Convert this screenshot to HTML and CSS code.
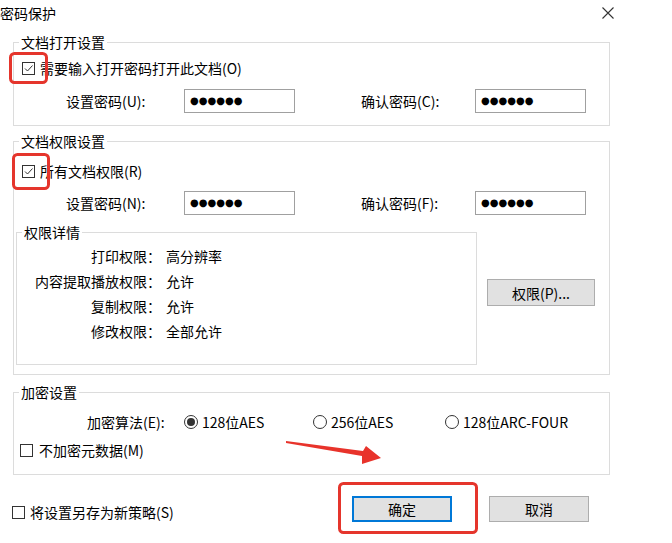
FILE: index.html
```html
<!DOCTYPE html>
<html lang="zh-CN">
<head>
  <meta charset="UTF-8">
  <title>密码保护</title>
  <link rel="stylesheet" href="styles.css">
</head>
<body>

<div class="titlebar">
  <span class="title">密码保护</span>
  <span class="close">
    <svg width="12" height="12" viewBox="0 0 12 12"><path d="M0.5 0.5 L11.5 11.5 M11.5 0.5 L0.5 11.5" stroke="#333" stroke-width="1.1" fill="none"/></svg>
  </span>
</div>

<div class="dialog">
  <!-- 文档打开设置 -->
  <fieldset class="group g-open">
    <legend>文档打开设置</legend>
    <label class="check-row">
      <span class="checkbox"><svg width="11" height="11" viewBox="0 0 11 11"><path d="M2 5.5 L4.5 8 L9.5 2.5" stroke="#333" stroke-width="1" fill="none"/></svg></span>
      需要输入打开密码打开此文档(O)
    </label>
    <div class="pw-row">
      <span class="pw-label">设置密码(U):</span><span class="pw-input">●●●●●●</span>
      <span class="pw-label right">确认密码(C):</span><span class="pw-input">●●●●●●</span>
    </div>
  </fieldset>

  <!-- 文档权限设置 -->
  <fieldset class="group g-perm">
    <legend>文档权限设置</legend>
    <label class="check-row">
      <span class="checkbox"><svg width="11" height="11" viewBox="0 0 11 11"><path d="M2 5.5 L4.5 8 L9.5 2.5" stroke="#333" stroke-width="1" fill="none"/></svg></span>
      所有文档权限(R)
    </label>
    <div class="pw-row">
      <span class="pw-label">设置密码(N):</span><span class="pw-input">●●●●●●</span>
      <span class="pw-label right">确认密码(F):</span><span class="pw-input">●●●●●●</span>
    </div>
    <div class="perm-area">
      <fieldset class="detail">
        <legend>权限详情</legend>
        <div class="detail-row"><span class="detail-key">打印权限：</span><span class="detail-val">高分辨率</span></div>
        <div class="detail-row"><span class="detail-key">内容提取播放权限：</span><span class="detail-val">允许</span></div>
        <div class="detail-row"><span class="detail-key">复制权限：</span><span class="detail-val">允许</span></div>
        <div class="detail-row"><span class="detail-key">修改权限：</span><span class="detail-val">全部允许</span></div>
      </fieldset>
      <button class="btn perm-btn">权限(P)...</button>
    </div>
  </fieldset>

  <!-- 加密设置 -->
  <fieldset class="group g-enc">
    <legend>加密设置</legend>
    <div class="algo-row">
      <span class="algo-label">加密算法(E):</span>
      <label class="radio-opt opt1"><span class="radio on"></span>128位AES</label>
      <label class="radio-opt opt2"><span class="radio"></span>256位AES</label>
      <label class="radio-opt"><span class="radio"></span>128位ARC-FOUR</label>
    </div>
    <label class="check-row">
      <span class="checkbox"></span>
      不加密元数据(M)
    </label>
  </fieldset>

  <div class="footer">
    <label class="check-row">
      <span class="checkbox"></span>
      将设置另存为新策略(S)
    </label>
    <div class="footer-btns">
      <button class="btn default">确定</button>
      <button class="btn">取消</button>
    </div>
  </div>
</div>

<!-- red annotations -->
<svg class="marks" width="672" height="543" viewBox="0 0 672 543">
  <rect x="10.5" y="53.5" width="36" height="29" rx="4" fill="none" stroke="#e5352c" stroke-width="3"/>
  <rect x="13.5" y="154.5" width="35" height="34" rx="4" fill="none" stroke="#e5352c" stroke-width="3"/>
  <rect x="339.5" y="483.5" width="137" height="49" rx="4" fill="none" stroke="#e5352c" stroke-width="3"/>
  <polygon points="286,441 363,451 366,446 381,458 362,464 362,456 286,443" fill="#e8332b"/>
</svg>

</body>
</html>
```

FILE: styles.css
```css
body {
  margin: 0;
  width: 672px;
  height: 543px;
  overflow: hidden;
  position: relative;
  background: #ffffff;
  color: #000;
  font-family: "Noto Sans CJK SC", "Noto Sans", sans-serif;
  font-size: 14px;
  line-height: 20px;
}

/* Title bar */
.titlebar {
  display: flex;
  justify-content: space-between;
  align-items: center;
  height: 26px;
}

.close {
  display: flex;
  margin-right: 58px;
}

.dialog {
  margin-top: 6px;
  margin-left: 13px;
  width: 597px;
}

/* Group boxes */
fieldset {
  margin: 0;
  padding: 0;
  min-width: 0;
  border: 1px solid #dcdcdc;
}

legend {
  margin-left: 5px;
  padding: 0 2px;
  line-height: 20px;
}

.group {
  padding-bottom: 12px;
}

.g-perm {
  margin-top: 5px;
  padding-bottom: 9px;
}

.g-enc {
  margin-top: 7px;
  padding-bottom: 14px;
}

/* Checkboxes */
.check-row {
  display: flex;
  align-items: center;
  gap: 5px;
  height: 20px;
  margin-left: 8px;
}

.g-open .check-row {
  margin-top: 6px;
}

.g-perm .check-row {
  margin-top: 10px;
}

.g-enc .check-row {
  margin-top: 8px;
  margin-left: 6px;
  gap: 6px;
}

.checkbox {
  display: flex;
  align-items: center;
  justify-content: center;
  width: 13px;
  height: 13px;
  box-sizing: border-box;
  border: 1px solid #333;
  background: #fff;
}

/* Password rows */
.pw-row {
  display: flex;
  align-items: center;
  margin-top: 11px;
  padding-left: 52px;
}

.g-perm .pw-row {
  margin-top: 10px;
}

.pw-label {
  width: 118px;
}

.pw-label.right {
  width: 114px;
  margin-left: 66px;
}

.pw-input {
  display: flex;
  align-items: center;
  width: 111px;
  height: 24px;
  box-sizing: border-box;
  padding-left: 5px;
  border: 1px solid #a0a0a0;
  font-family: "DejaVu Sans", sans-serif;
  font-size: 10px;
  letter-spacing: 0;
}

/* Permission details */
.perm-area {
  display: flex;
  align-items: flex-start;
  margin-top: 7px;
  margin-left: 2px;
}

.detail {
  width: 461px;
  box-sizing: border-box;
  padding: 1px 0 21px;
}

.detail-row {
  display: flex;
  align-items: center;
  height: 25px;
}

.detail-key {
  width: 144px;
  text-align: right;
}

.detail-val {
  margin-left: 5px;
}

/* Buttons */
.btn {
  width: 100px;
  height: 26px;
  padding: 0;
  background: #e1e1e1;
  border: 1px solid #adadad;
  font-family: inherit;
  font-size: 14px;
  color: #000;
}

.btn.default {
  border: 2px solid #0078d7;
}

.perm-btn {
  width: 108px;
  height: 27px;
  margin-top: 57px;
  margin-left: 10px;
}

/* Encryption */
.algo-row {
  display: flex;
  align-items: center;
  height: 20px;
  margin-top: 10px;
  padding-left: 73px;
}

.algo-label {
  width: 97px;
}

.radio-opt {
  display: flex;
  align-items: center;
  gap: 4px;
}

.opt1 {
  width: 129px;
}

.opt2 {
  width: 132px;
}

.radio {
  display: flex;
  align-items: center;
  justify-content: center;
  width: 14px;
  height: 14px;
  box-sizing: border-box;
  border: 1px solid #333;
  border-radius: 50%;
}

.radio.on::after {
  content: "";
  width: 8px;
  height: 8px;
  border-radius: 50%;
  background: #333;
}

/* Footer */
.footer {
  display: flex;
  align-items: center;
  height: 26px;
  margin-top: 21px;
  padding-right: 21px;
}

.footer .check-row {
  margin-left: -1px;
  margin-top: 6px;
}

.footer-btns {
  display: flex;
  gap: 37px;
  margin-left: auto;
}

.marks {
  position: absolute;
  top: 0;
  left: 0;
  pointer-events: none;
}
```
